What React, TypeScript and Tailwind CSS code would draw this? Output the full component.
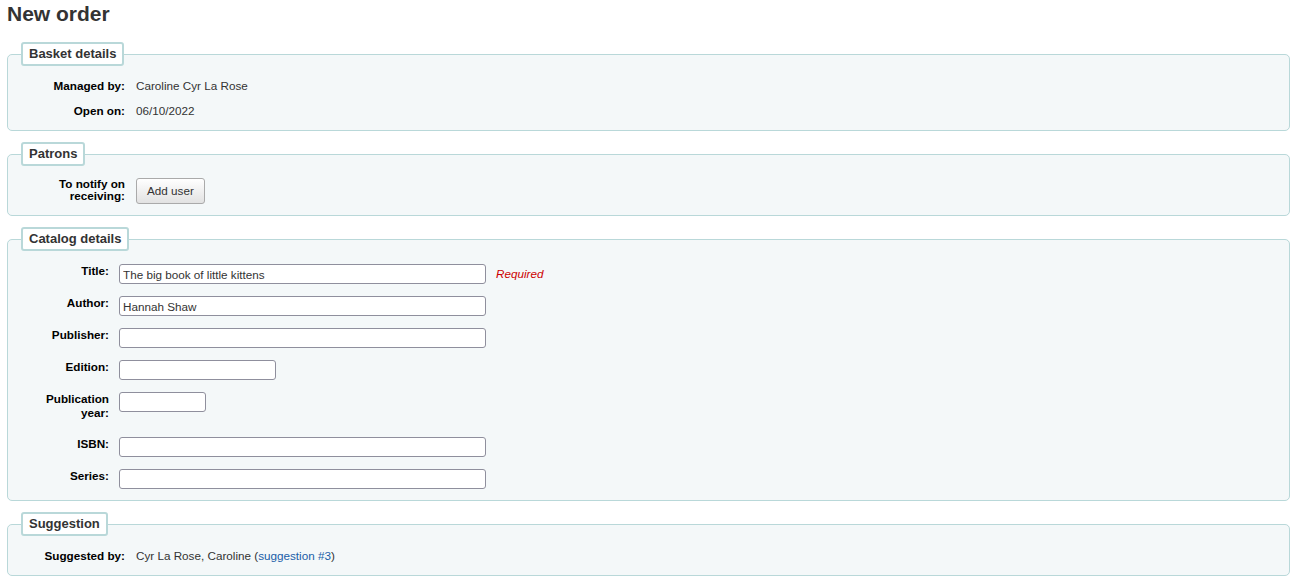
import React from "react";

const font = { fontFamily: '"Liberation Sans", Arial, sans-serif' };

function Fieldset({ legend, children, className = "" }: { legend: string; children: React.ReactNode; className?: string }) {
  return (
    <fieldset
      className={`mx-[7px] mb-[11px] border border-[#b9d8d9] rounded-[5px] bg-[#f4f8f9] pl-[13px] pr-[13px] ${className}`}
    >
      <legend className="bg-white border-2 border-[#b9d8d9] rounded-[3px] px-[6px] py-[3px] text-[13px] leading-[14px] font-bold text-[#333]">
        {legend}
      </legend>
      {children}
    </fieldset>
  );
}

function InfoRow({ label, children, last }: { label: string; children: React.ReactNode; last?: boolean }) {
  return (
    <div className={`flex items-start ${last ? "" : "mb-[10px]"}`}>
      <div className="w-[104px] mr-[11px] text-right font-bold text-black leading-[15px]">{label}</div>
      <div className="leading-[15px] text-[#333]">{children}</div>
    </div>
  );
}

function InputRow({
  label,
  width,
  value = "",
  extra,
  tall,
  last,
}: {
  label: string;
  width: number;
  value?: string;
  extra?: React.ReactNode;
  tall?: boolean;
  last?: boolean;
}) {
  const w =
    width === 367 ? "w-[367px]" : width === 157 ? "w-[157px]" : "w-[87px]";
  return (
    <div className={`flex items-start ${last ? "" : "mb-[12px]"}`}>
      <div
        className={`w-[88px] mr-[10px] text-right font-bold text-black leading-[14px] ${tall ? "pb-[5px]" : ""}`}
      >
        {label}
      </div>
      <input
        readOnly
        value={value}
        className={`${w} h-[20px] border border-[#8f8f9d] rounded-[3px] bg-white px-[3px] text-[11.7px] text-[#333] outline-none`}
        style={font}
      />
      {extra}
    </div>
  );
}

export default function App() {
  return (
    <div className="bg-white min-h-[583px] text-[11.7px]" style={font}>
      <h1 className="ml-[7px] pt-[2px] mb-[16px] text-[21px] leading-[24px] font-bold text-[#333]">New order</h1>

      <Fieldset legend="Basket details" className="pt-[12px] pb-[12px]">
        <InfoRow label="Managed by:">Caroline Cyr La Rose</InfoRow>
        <InfoRow label="Open on:" last>
          06/10/2022
        </InfoRow>
      </Fieldset>

      <Fieldset legend="Patrons" className="pt-[12px] pb-[11px]">
        <div className="flex items-start">
          <div className="w-[104px] mr-[11px] text-right font-bold text-black leading-[12px]">
            To notify on receiving:
          </div>
          <button
            className="h-[26px] px-[10px] border border-[#aaa] rounded-[3px] text-[#333] leading-[24px] bg-gradient-to-b from-white to-[#e2e2e2]"
            style={font}
          >
            Add user
          </button>
        </div>
      </Fieldset>

      <Fieldset legend="Catalog details" className="pt-[13px] pb-[11px]">
        <InputRow
          label="Title:"
          width={367}
          value="The big book of little kittens"
          extra={<span className="ml-[10px] leading-[20px] italic text-[#c00]">Required</span>}
        />
        <InputRow label="Author:" width={367} value="Hannah Shaw" />
        <InputRow label="Publisher:" width={367} />
        <InputRow label="Edition:" width={157} />
        <InputRow label="Publication year:" width={87} tall />
        <InputRow label="ISBN:" width={367} />
        <InputRow label="Series:" width={367} last />
      </Fieldset>

      <Fieldset legend="Suggestion" className="pt-[12px] pb-[12px] mb-0">
        <InfoRow label="Suggested by:" last>
          Cyr La Rose, Caroline (<a className="text-[#1a5ea8]" href="#">suggestion #3</a>)
        </InfoRow>
      </Fieldset>
    </div>
  );
}
